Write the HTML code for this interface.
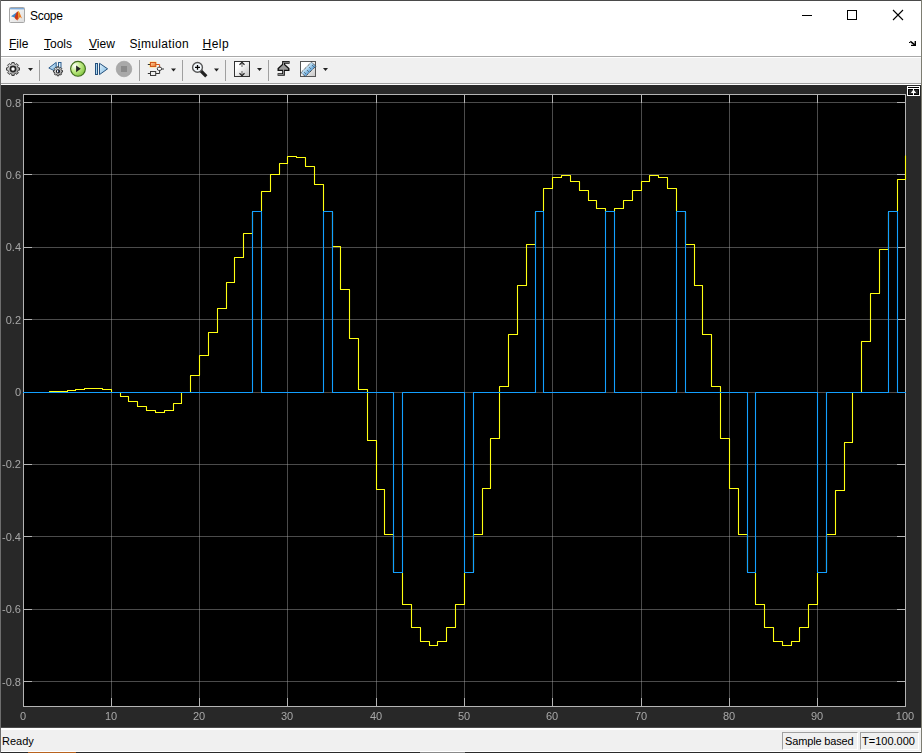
<!DOCTYPE html>
<html><head><meta charset="utf-8">
<style>
html,body{margin:0;padding:0;}
body{width:922px;height:753px;overflow:hidden;position:relative;background:#ffffff;font-family:"Liberation Sans",sans-serif;}
.a{position:absolute;}
#title{left:0;top:0;width:922px;height:56px;background:#fff;}
.tt{position:absolute;font-size:12px;color:#000;line-height:14px;white-space:nowrap;}
.mi{position:absolute;top:37px;font-size:12px;color:#000;line-height:14px;white-space:nowrap;}
.u{text-decoration:underline;text-underline-offset:1px;}
#tb{left:0;top:56px;width:922px;height:29px;background:#f0f0f0;}
#scope{left:0;top:85px;width:922px;height:643px;background:#282828;}
#status{left:0;top:728px;width:922px;height:25px;background:#f0f0f0;}
.xl{position:absolute;top:710px;width:40px;text-align:center;font-size:11px;line-height:13px;color:#a8a8a8;will-change:transform;}
.yl{position:absolute;left:-19px;width:40px;text-align:right;font-size:11px;line-height:13px;color:#a8a8a8;will-change:transform;}
.st{position:absolute;font-size:11px;line-height:13px;color:#000;white-space:nowrap;}
</style></head>
<body>
<div class="a" id="title"></div>

<!-- app icon -->
<svg class="a" style="left:9px;top:7px" width="16" height="16" viewBox="0 0 16 16">
<defs><linearGradient id="ig" x1="0" y1="0" x2="1" y2="1"><stop offset="0" stop-color="#ffffff"/><stop offset="1" stop-color="#dcdcdc"/></linearGradient></defs>
<rect x="0.5" y="0.5" width="15" height="15" rx="1" fill="url(#ig)" stroke="#a6a6a6"/>
<rect x="1" y="1" width="14" height="1.4" fill="#7fabd9"/>
<path d="M2 9.3 L7.5 5.5 L8 8 L5.5 10.5 Z" fill="#3c8bd0"/>
<path d="M5.5 10.5 L7.5 5.5 L9.3 4 L10 7 L8.5 13.5 L6.5 12 Z" fill="#c8381a"/>
<path d="M9.3 4 L10.5 5.5 L13 11.5 L11 10 L8.5 13.5 L10 7 Z" fill="#ec7a1c"/>
<path d="M9.3 4.3 L10 4.5 L10.3 8 L9.4 9 Z" fill="#f6c02c"/>
</svg>
<div class="tt" style="left:30px;top:9px;letter-spacing:-0.3px">Scope</div>
<!-- window buttons -->
<div class="a" style="left:802px;top:15px;width:10px;height:1px;background:#000"></div>
<div class="a" style="left:847px;top:10px;width:8px;height:8px;border:1px solid #000"></div>
<svg class="a" style="left:892px;top:9px" width="12" height="12" viewBox="0 0 12 12"><path d="M1 1 L11 11 M11 1 L1 11" stroke="#000" stroke-width="1.1"/></svg>

<!-- menu -->
<div class="mi" style="left:9px"><span class="u">F</span>ile</div>
<div class="mi" style="left:44px"><span class="u">T</span>ools</div>
<div class="mi" style="left:89px"><span class="u">V</span>iew</div>
<div class="mi" style="left:129.5px;letter-spacing:0.35px">S<span class="u">i</span>mulation</div>
<div class="mi" style="left:202.5px;letter-spacing:0.5px"><span class="u">H</span>elp</div>
<svg class="a" style="left:908px;top:40px" width="10" height="8" viewBox="0 0 10 8"><path d="M2.3 1.3 L6.8 4.8" stroke="#000" stroke-width="1.7" fill="none"/><rect x="6.6" y="1" width="1.4" height="5" fill="#000"/><rect x="3" y="4.8" width="5" height="1.2" fill="#000"/><rect x="1" y="2" width="1" height="1" fill="#000"/></svg>

<!-- toolbar -->
<div class="a" id="tb"></div>
<div class="a" style="left:1px;top:56px;width:920px;height:1px;background:#a9a9a9"></div>
<div class="a" style="left:1px;top:57px;width:920px;height:1px;background:#ffffff"></div>
<div class="a" style="left:1px;top:83px;width:920px;height:1px;background:#a0a0a0"></div>
<div class="a" style="left:1px;top:84px;width:920px;height:1px;background:#ffffff"></div>


<svg class="a" style="left:0;top:56px" width="340" height="28" viewBox="0 56 340 28">
<defs>
<linearGradient id="gg" x1="0" y1="0" x2="1" y2="1"><stop offset="0" stop-color="#f6f6f6"/><stop offset="1" stop-color="#8c8c8c"/></linearGradient>
<radialGradient id="pg" cx="0.3" cy="0.3" r="0.8"><stop offset="0" stop-color="#ffffff"/><stop offset="0.45" stop-color="#c4ec8a"/><stop offset="1" stop-color="#7cc23a"/></radialGradient>
<linearGradient id="bg" x1="0" y1="0" x2="1" y2="1"><stop offset="0" stop-color="#e2f3fc"/><stop offset="1" stop-color="#7ab6e2"/></linearGradient>
<linearGradient id="wg" x1="0" y1="0" x2="1" y2="1"><stop offset="0.3" stop-color="#ffffff"/><stop offset="1" stop-color="#c4c4c4"/></linearGradient>
<linearGradient id="og" x1="0" y1="0" x2="1" y2="1"><stop offset="0" stop-color="#fbd2a0"/><stop offset="1" stop-color="#e8762a"/></linearGradient>
<linearGradient id="rg" gradientUnits="userSpaceOnUse" x1="306" y1="67" x2="310.5" y2="71.5"><stop offset="0" stop-color="#d6effc"/><stop offset="1" stop-color="#5c9fd6"/></linearGradient>
</defs>
<!-- gear -->
<path d="M18.17 67.82 L19.50 67.84 L19.50 70.16 L18.17 70.18 L17.49 71.82 L18.41 72.77 L16.77 74.41 L15.82 73.49 L14.18 74.17 L14.16 75.50 L11.84 75.50 L11.82 74.17 L10.18 73.49 L9.23 74.41 L7.59 72.77 L8.51 71.82 L7.83 70.18 L6.50 70.16 L6.50 67.84 L7.83 67.82 L8.51 66.18 L7.59 65.23 L9.23 63.59 L10.18 64.51 L11.82 63.83 L11.84 62.50 L14.16 62.50 L14.18 63.83 L15.82 64.51 L16.77 63.59 L18.41 65.23 L17.49 66.18 Z" fill="url(#gg)" stroke="#2e2e2e" stroke-width="0.9"/>
<circle cx="13" cy="69" r="2.6" fill="#ffffff" stroke="#262626" stroke-width="1.7"/>
<path d="M28 68 H33 L30.5 71 Z" fill="#222"/>
<rect x="39" y="60" width="1" height="21" fill="#a0a0a0"/>
<!-- step back -->
<rect x="58.5" y="62.5" width="2.5" height="6" fill="#d8eefa" stroke="#2f5f8f" stroke-width="1"/>
<path d="M48.8 68 L56.2 62.4 L56.2 71.6 Z" fill="url(#bg)" stroke="#2f5f8f" stroke-width="1" stroke-linejoin="round"/>
<path d="M61.61 70.48 L62.53 70.49 L62.53 72.11 L61.61 72.12 L61.13 73.27 L61.77 73.93 L60.63 75.07 L59.97 74.43 L58.82 74.91 L58.81 75.83 L57.19 75.83 L57.18 74.91 L56.03 74.43 L55.37 75.07 L54.23 73.93 L54.87 73.27 L54.39 72.12 L53.47 72.11 L53.47 70.49 L54.39 70.48 L54.87 69.33 L54.23 68.67 L55.37 67.53 L56.03 68.17 L57.18 67.69 L57.19 66.77 L58.81 66.77 L58.82 67.69 L59.97 68.17 L60.63 67.53 L61.77 68.67 L61.13 69.33 Z" fill="url(#gg)" stroke="#2e2e2e" stroke-width="0.9"/>
<circle cx="58" cy="71.3" r="1.6" fill="#3a4f80" stroke="#222" stroke-width="1.1"/><rect x="57" y="70.3" width="1" height="2" fill="#fff"/>
<!-- play -->
<circle cx="78" cy="68.8" r="7.4" fill="url(#pg)" stroke="#3f6c1c" stroke-width="1.1"/>
<path d="M76.1 65.5 L80.8 68.8 L76.1 72.3 Z" fill="#222"/>
<!-- step fwd -->
<rect x="95.5" y="63.5" width="2" height="11" fill="#a8d4f0" stroke="#24507c" stroke-width="1"/>
<path d="M99.5 63.3 L107.6 68.8 L99.5 74.6 Z" fill="url(#bg)" stroke="#24507c" stroke-width="1" stroke-linejoin="round"/>
<!-- stop -->
<circle cx="124" cy="69" r="7.8" fill="#a9a9a9" stroke="#9c9c9c" stroke-width="0.6"/>
<rect x="121" y="66" width="6" height="6" fill="#8a8a8a"/>
<rect x="139" y="60" width="1" height="21" fill="#a0a0a0"/>
<!-- signal highlight -->
<rect x="149" y="61.3" width="8" height="6.4" fill="#fde6a8" rx="1.5"/>
<rect x="147.8" y="64" width="2.7" height="1" fill="#333"/>
<rect x="147.8" y="73" width="2.7" height="1" fill="#333"/>
<rect x="161.5" y="68.5" width="2.5" height="1" fill="#333"/>
<rect x="150.5" y="62.5" width="5.2" height="4" fill="url(#og)" stroke="#d2571a" stroke-width="1"/>
<path d="M155.7 64.5 H159.6 V67.3" fill="none" stroke="#d2571a" stroke-width="1"/>
<path d="M155.7 73.5 H159.6 V70.3" fill="none" stroke="#333" stroke-width="1"/>
<rect x="157.3" y="67.2" width="4.3" height="3.2" rx="1.5" fill="#fff" stroke="#333" stroke-width="1"/>
<rect x="150.5" y="71.5" width="5.2" height="4" fill="#eeeeee" stroke="#3a3a3a" stroke-width="1"/>
<path d="M171 68.5 H176 L173.5 71.5 Z" fill="#222"/>
<rect x="182" y="60" width="1" height="21" fill="#a0a0a0"/>
<!-- zoom -->
<path d="M201.2 71.2 L205.2 75.2" stroke="#222" stroke-width="3.2" stroke-linecap="square"/>
<circle cx="197.5" cy="67.4" r="4.9" fill="#f4f9fd" stroke="#555" stroke-width="1.4"/>
<path d="M195 67.4 H200 M197.5 65 V69.8" stroke="#000" stroke-width="1.3"/>
<path d="M214 68.5 H219 L216.5 71.5 Z" fill="#222"/>
<rect x="225" y="60" width="1" height="21" fill="#a0a0a0"/>
<!-- scale axes -->
<rect x="234.5" y="61.5" width="15" height="15" fill="url(#wg)" stroke="#333" stroke-width="1"/>
<path d="M242 62 V67 M242 76 V71" stroke="#8a8a8a" stroke-width="1.4"/>
<path d="M239.5 64.8 L242 62.4 L244.5 64.8 M239.5 73.2 L242 75.6 L244.5 73.2" fill="none" stroke="#222" stroke-width="1.2"/>
<path d="M257 68 H262 L259.5 71 Z" fill="#222"/>
<rect x="268" y="60" width="1" height="21" fill="#a0a0a0"/>
<!-- trigger -->
<path d="M289.6 62.3 H283.5 V74.5 H277.6" fill="none" stroke="#111" stroke-width="2.7"/>
<path d="M278.2 70.4 L278.2 68.6 L283.5 63.6 L288.8 68.6 L288.8 70.4 Z" fill="#9a9a9a" stroke="#111" stroke-width="1.4" stroke-linejoin="miter"/>
<path d="M289 62.3 H283.5 V74.5 H278.2" fill="none" stroke="#9a9a9a" stroke-width="0.9"/>
<!-- measure -->
<rect x="300.5" y="61.5" width="15" height="15" fill="url(#wg)" stroke="#555" stroke-width="1"/>
<path d="M301 72.5 L311.6 62 L315.8 66.3 L305.3 76.6 Z" fill="url(#rg)" stroke="#222" stroke-width="1" stroke-dasharray="1 1"/>
<path d="M304.5 72.5 L306 74 M307 70 L308.5 71.5 M309.5 67.5 L311 69 M312 65 L313.5 66.5" stroke="#222" stroke-width="0.9" stroke-dasharray="0.8 0.7"/>
<path d="M323 68 H328 L325.5 71 Z" fill="#222"/>
</svg>

<!-- scope area -->
<div class="a" id="scope"></div>
<svg class="a" style="left:0;top:0" width="922" height="753">
<rect x="23" y="94" width="883" height="613" fill="#b4b4b4"/>
<rect x="24" y="95" width="881" height="611" fill="#000"/>
<rect x="111" y="95" width="1" height="611" fill="#afafaf" fill-opacity="0.43"/>
<rect x="111" y="698" width="1" height="8" fill="#b4b4b4"/>
<rect x="111" y="95" width="1" height="8" fill="#b4b4b4"/>
<rect x="199" y="95" width="1" height="611" fill="#afafaf" fill-opacity="0.43"/>
<rect x="199" y="698" width="1" height="8" fill="#b4b4b4"/>
<rect x="199" y="95" width="1" height="8" fill="#b4b4b4"/>
<rect x="287" y="95" width="1" height="611" fill="#afafaf" fill-opacity="0.43"/>
<rect x="287" y="698" width="1" height="8" fill="#b4b4b4"/>
<rect x="287" y="95" width="1" height="8" fill="#b4b4b4"/>
<rect x="376" y="95" width="1" height="611" fill="#afafaf" fill-opacity="0.43"/>
<rect x="376" y="698" width="1" height="8" fill="#b4b4b4"/>
<rect x="376" y="95" width="1" height="8" fill="#b4b4b4"/>
<rect x="464" y="95" width="1" height="611" fill="#afafaf" fill-opacity="0.43"/>
<rect x="464" y="698" width="1" height="8" fill="#b4b4b4"/>
<rect x="464" y="95" width="1" height="8" fill="#b4b4b4"/>
<rect x="552" y="95" width="1" height="611" fill="#afafaf" fill-opacity="0.43"/>
<rect x="552" y="698" width="1" height="8" fill="#b4b4b4"/>
<rect x="552" y="95" width="1" height="8" fill="#b4b4b4"/>
<rect x="641" y="95" width="1" height="611" fill="#afafaf" fill-opacity="0.43"/>
<rect x="641" y="698" width="1" height="8" fill="#b4b4b4"/>
<rect x="641" y="95" width="1" height="8" fill="#b4b4b4"/>
<rect x="729" y="95" width="1" height="611" fill="#afafaf" fill-opacity="0.43"/>
<rect x="729" y="698" width="1" height="8" fill="#b4b4b4"/>
<rect x="729" y="95" width="1" height="8" fill="#b4b4b4"/>
<rect x="817" y="95" width="1" height="611" fill="#afafaf" fill-opacity="0.43"/>
<rect x="817" y="698" width="1" height="8" fill="#b4b4b4"/>
<rect x="817" y="95" width="1" height="8" fill="#b4b4b4"/>
<rect x="24" y="102" width="881" height="1" fill="#afafaf" fill-opacity="0.43"/>
<rect x="24" y="102" width="8" height="1" fill="#b4b4b4"/>
<rect x="897" y="102" width="8" height="1" fill="#b4b4b4"/>
<rect x="24" y="174" width="881" height="1" fill="#afafaf" fill-opacity="0.43"/>
<rect x="24" y="174" width="8" height="1" fill="#b4b4b4"/>
<rect x="897" y="174" width="8" height="1" fill="#b4b4b4"/>
<rect x="24" y="247" width="881" height="1" fill="#afafaf" fill-opacity="0.43"/>
<rect x="24" y="247" width="8" height="1" fill="#b4b4b4"/>
<rect x="897" y="247" width="8" height="1" fill="#b4b4b4"/>
<rect x="24" y="319" width="881" height="1" fill="#afafaf" fill-opacity="0.43"/>
<rect x="24" y="319" width="8" height="1" fill="#b4b4b4"/>
<rect x="897" y="319" width="8" height="1" fill="#b4b4b4"/>
<rect x="24" y="392" width="881" height="1" fill="#afafaf" fill-opacity="0.43"/>
<rect x="24" y="392" width="8" height="1" fill="#b4b4b4"/>
<rect x="897" y="392" width="8" height="1" fill="#b4b4b4"/>
<rect x="24" y="464" width="881" height="1" fill="#afafaf" fill-opacity="0.43"/>
<rect x="24" y="464" width="8" height="1" fill="#b4b4b4"/>
<rect x="897" y="464" width="8" height="1" fill="#b4b4b4"/>
<rect x="24" y="536" width="881" height="1" fill="#afafaf" fill-opacity="0.43"/>
<rect x="24" y="536" width="8" height="1" fill="#b4b4b4"/>
<rect x="897" y="536" width="8" height="1" fill="#b4b4b4"/>
<rect x="24" y="609" width="881" height="1" fill="#afafaf" fill-opacity="0.43"/>
<rect x="24" y="609" width="8" height="1" fill="#b4b4b4"/>
<rect x="897" y="609" width="8" height="1" fill="#b4b4b4"/>
<rect x="24" y="681" width="881" height="1" fill="#afafaf" fill-opacity="0.43"/>
<rect x="24" y="681" width="8" height="1" fill="#b4b4b4"/>
<rect x="897" y="681" width="8" height="1" fill="#b4b4b4"/>
<path d="M23 392.5 H31.5 V392.5 H40.5 V392.5 H49.5 V391.5 H58.5 V391.5 H67.5 V390.5 H75.5 V389.5 H84.5 V388.5 H93.5 V388.5 H102.5 V389.5 H111.5 V392.5 H120.5 V396.5 H128.5 V401.5 H137.5 V406.5 H146.5 V410.5 H155.5 V412.5 H164.5 V410.5 H173.5 V403.5 H181.5 V392.5 H190.5 V375.5 H199.5 V355.5 H208.5 V332.5 H217.5 V308.5 H226.5 V282.5 H234.5 V257.5 H243.5 V233.5 H252.5 V211.5 H261.5 V191.5 H270.5 V174.5 H279.5 V163.5 H287.5 V156.5 H296.5 V157.5 H305.5 V166.5 H314.5 V184.5 H323.5 V211.5 H332.5 V246.5 H340.5 V289.5 H349.5 V338.5 H358.5 V389.5 H367.5 V440.5 H376.5 V489.5 H384.5 V534.5 H393.5 V572.5 H402.5 V604.5 H411.5 V627.5 H420.5 V641.5 H429.5 V645.5 H437.5 V641.5 H446.5 V627.5 H455.5 V604.5 H464.5 V572.5 H473.5 V534.5 H482.5 V488.5 H490.5 V438.5 H499.5 V386.5 H508.5 V334.5 H517.5 V285.5 H526.5 V244.5 H535.5 V211.5 H543.5 V188.5 H552.5 V177.5 H561.5 V175.5 H570.5 V181.5 H579.5 V190.5 H588.5 V200.5 H596.5 V208.5 H605.5 V211.5 H614.5 V208.5 H623.5 V200.5 H632.5 V190.5 H641.5 V181.5 H649.5 V175.5 H658.5 V177.5 H667.5 V188.5 H676.5 V211.5 H685.5 V244.5 H694.5 V285.5 H702.5 V334.5 H711.5 V386.5 H720.5 V438.5 H729.5 V488.5 H738.5 V534.5 H747.5 V572.5 H755.5 V604.5 H764.5 V627.5 H773.5 V641.5 H782.5 V645.5 H791.5 V641.5 H799.5 V627.5 H808.5 V604.5 H817.5 V572.5 H826.5 V534.5 H835.5 V490.5 H844.5 V442.5 H852.5 V392.5 H861.5 V341.5 H870.5 V293.5 H879.5 V249.5 H888.5 V211.5 H897.5 V179.5 H905.5 V155.5" fill="none" stroke="#ffff11" stroke-width="1.1" stroke-linejoin="round"/>
<path d="M23 392.5 H252.5 V211.5 H261.5 V392.5 H323.5 V211.5 H332.5 V392.5 H393.5 V572.5 H402.5 V392.5 H464.5 V572.5 H473.5 V392.5 H535.5 V211.5 H543.5 V392.5 H605.5 V211.5 H614.5 V392.5 H676.5 V211.5 H685.5 V392.5 H747.5 V572.5 H755.5 V392.5 H817.5 V572.5 H826.5 V392.5 H888.5 V211.5 H897.5 V392.5 H906" fill="none" stroke="#139fff" stroke-width="1.1" stroke-linejoin="round"/>
</svg>
<div class="xl" style="left:3px">0</div>
<div class="xl" style="left:91px">10</div>
<div class="xl" style="left:179px">20</div>
<div class="xl" style="left:267px">30</div>
<div class="xl" style="left:356px">40</div>
<div class="xl" style="left:444px">50</div>
<div class="xl" style="left:532px">60</div>
<div class="xl" style="left:621px">70</div>
<div class="xl" style="left:709px">80</div>
<div class="xl" style="left:797px">90</div>
<div class="xl" style="left:885px">100</div>
<div class="yl" style="top:97px">0.8</div>
<div class="yl" style="top:169px">0.6</div>
<div class="yl" style="top:241px">0.4</div>
<div class="yl" style="top:314px">0.2</div>
<div class="yl" style="top:386px">0</div>
<div class="yl" style="top:458px">-0.2</div>
<div class="yl" style="top:531px">-0.4</div>
<div class="yl" style="top:603px">-0.6</div>
<div class="yl" style="top:676px">-0.8</div>
<!-- undock icon -->
<svg class="a" style="left:907px;top:86px" width="13" height="10" viewBox="0 0 13 10">
<rect x="0" y="0" width="13" height="10" fill="#fff"/>
<rect x="1" y="1" width="11" height="1" fill="#000"/>
<rect x="1" y="3" width="11" height="6" fill="#000"/>
<rect x="2" y="4" width="9" height="4" fill="#2a2a2a"/>
<rect x="6" y="3" width="1" height="6" fill="#fff"/>
<path d="M3.8 6.9 L6.5 3.4 L9.2 6.9 Z" fill="#fff"/>
</svg>

<!-- status bar -->
<div class="a" id="status"></div>

<div class="a" style="left:1px;top:727px;width:920px;height:1px;background:#4a4a4a"></div>
<div class="a" style="left:1px;top:728px;width:920px;height:1px;background:#ffffff"></div>
<div class="a" style="left:1px;top:729px;width:920px;height:1px;background:#ffffff"></div>
<div class="a" style="left:1px;top:751px;width:920px;height:1px;background:#ffffff"></div>
<div class="a" style="left:0;top:752px;width:922px;height:1px;background:#2a2a2a"></div>
<div class="st" style="left:2px;top:735px">Ready</div>
<div class="a" style="left:782px;top:732px;width:74px;height:16px;border-left:1px solid #a0a0a0;border-top:1px solid #a0a0a0;border-right:1px solid #fff;border-bottom:1px solid #fff"></div>
<div class="st" style="left:785px;top:735px;letter-spacing:-0.15px">Sample based</div>
<div class="a" style="left:860px;top:732px;width:57px;height:16px;border-left:1px solid #a0a0a0;border-top:1px solid #a0a0a0;border-right:1px solid #fff;border-bottom:1px solid #fff"></div>
<div class="st" style="left:862px;top:735px">T=100.000</div>
<!-- window frame -->
<div class="a" style="left:0;top:0;width:922px;height:1px;background:#4a4a4a"></div>
<div class="a" style="left:0;top:0;width:1px;height:753px;background:#6e6e6e"></div>
<div class="a" style="left:921px;top:0;width:1px;height:753px;background:#7d7d72"></div>
<div class="a" style="left:28px;top:752px;width:48px;height:1px;background:#b8621e"></div>
<div class="a" style="left:420px;top:752px;width:45px;height:1px;background:#8a8a8a"></div>
</body></html>
